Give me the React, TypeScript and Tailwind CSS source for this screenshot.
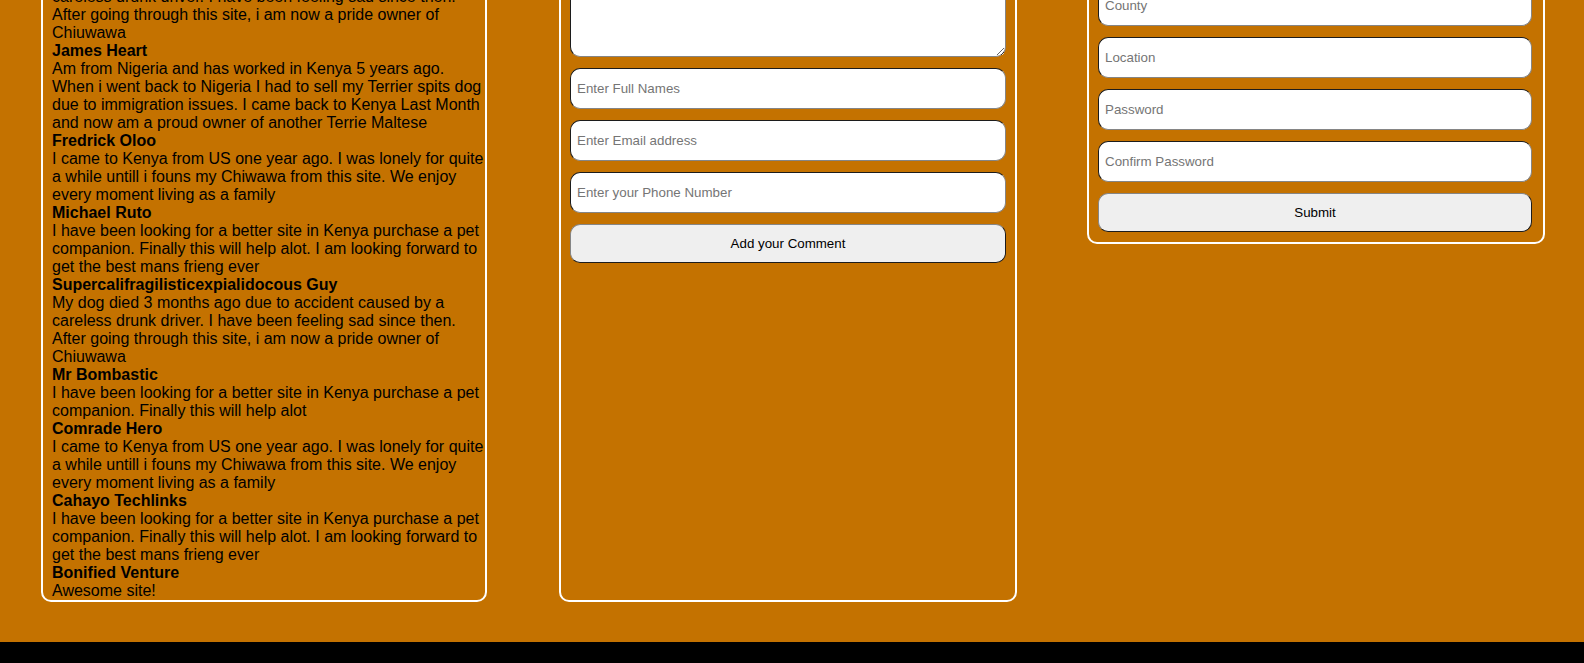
const testimonials = [
  {
    name: "Comrade Hero",
    text: "I came to Kenya from US one year ago. I was lonely for quite a while untill i founs my Chiwawa from this site. We enjoy every moment living as a family",
  },
  {
    name: "Mr Bombastic",
    text: "I have been looking for a better site in Kenya purchase a pet companion. Finally this will help alot",
  },
  {
    name: "Supercalifragilisticexpialidocous Guy",
    text: "My dog died 3 months ago due to accident caused by a careless drunk driver. I have been feeling sad since then. After going through this site, i am now a pride owner of Chiuwawa",
  },
  {
    name: "James Heart",
    text: "Am from Nigeria and has worked in Kenya 5 years ago. When i went back to Nigeria I had to sell my Terrier spits dog due to immigration issues. I came back to Kenya Last Month and now am a proud owner of another Terrie Maltese",
  },
  {
    name: "Fredrick Oloo",
    text: "I came to Kenya from US one year ago. I was lonely for quite a while untill i founs my Chiwawa from this site. We enjoy every moment living as a family",
  },
  {
    name: "Michael Ruto",
    text: "I have been looking for a better site in Kenya purchase a pet companion. Finally this will help alot. I am looking forward to get the best mans frieng ever",
  },
  {
    name: "Supercalifragilisticexpialidocous Guy",
    text: "My dog died 3 months ago due to accident caused by a careless drunk driver. I have been feeling sad since then. After going through this site, i am now a pride owner of Chiuwawa",
  },
  {
    name: "Mr Bombastic",
    text: "I have been looking for a better site in Kenya purchase a pet companion. Finally this will help alot",
  },
  {
    name: "Comrade Hero",
    text: "I came to Kenya from US one year ago. I was lonely for quite a while untill i founs my Chiwawa from this site. We enjoy every moment living as a family",
  },
  {
    name: "Cahayo Techlinks",
    text: "I have been looking for a better site in Kenya purchase a pet companion. Finally this will help alot. I am looking forward to get the best mans frieng ever",
  },
  {
    name: "Bonified Venture",
    text: "Awesome site!",
  },
];

const fieldCls =
  "h-[41px] shrink-0 rounded-[10px] border border-solid border-t-[#1c1c1c] border-l-[#1c1c1c] border-r-[#858585] border-b-[#858585] bg-white px-[6px] text-[13.33px] text-black outline-none placeholder:text-[#757575]";

const btnCls =
  "h-[39px] shrink-0 rounded-[10px] border border-solid border-t-[#858585] border-l-[#858585] border-r-[#1c1c1c] border-b-[#1c1c1c] bg-[#efefef] text-[13.33px] text-black";

const Field = ({ placeholder, w, type = "text" }: { placeholder: string; w: string; type?: string }) => (
  <input type={type} placeholder={placeholder} className={`${fieldCls} ${w}`} />
);

export default function App() {
  return (
    <div className="min-h-screen bg-[#c47200] font-['Liberation_Sans',Arial,sans-serif] flex flex-col overflow-hidden">
      <div className="-mt-[183px] flex items-stretch pl-[41px]">
        {/* testimonials */}
        <div className="w-[446px] shrink-0 rounded-[10px] border-2 border-white pl-[9px] pt-[7px] text-[16px] leading-[18px] text-black">
          {testimonials.map((t, i) => (
            <div key={i}>
              <p className="font-bold">{t.name}</p>
              <p>{t.text}</p>
            </div>
          ))}
        </div>

        {/* comment form */}
        <div className="ml-[72px] w-[458px] shrink-0 rounded-[10px] border-2 border-white pl-[9px] pt-[10px]">
          <div className="flex flex-col gap-[11px]">
            <textarea
              placeholder="Enter your comment"
              className="h-[228px] w-[436px] rounded-[10px] border border-solid border-t-[#1c1c1c] border-l-[#1c1c1c] border-r-[#858585] border-b-[#858585] bg-white px-[6px] py-[4px] text-[13.33px] outline-none placeholder:text-[#757575]"
            />
            <Field w="w-[436px]" placeholder="Enter Full Names" />
            <Field w="w-[436px]" placeholder="Enter Email address" />
            <Field w="w-[436px]" placeholder="Enter your Phone Number" />
            <button className={`${btnCls} w-[436px]`}>Add your Comment</button>
          </div>
        </div>

        {/* registration form */}
        <div className="ml-[70px] w-[458px] shrink-0 self-start rounded-[10px] border-2 border-white pb-[10px] pl-[9px] pt-[10px]">
          <div className="flex flex-col gap-[11px]">
            <Field w="w-[434px]" placeholder="Enter Full Names" />
            <Field w="w-[434px]" placeholder="Enter Email address" />
            <Field w="w-[434px]" placeholder="Phone Number" />
            <Field w="w-[434px]" placeholder="County" />
            <Field w="w-[434px]" placeholder="Location" />
            <Field w="w-[434px]" type="password" placeholder="Password" />
            <Field w="w-[434px]" type="password" placeholder="Confirm Password" />
            <button className={`${btnCls} w-[434px]`}>Submit</button>
          </div>
        </div>
      </div>

      <div className="mt-[40px] h-[60px] bg-black" />
    </div>
  );
}
